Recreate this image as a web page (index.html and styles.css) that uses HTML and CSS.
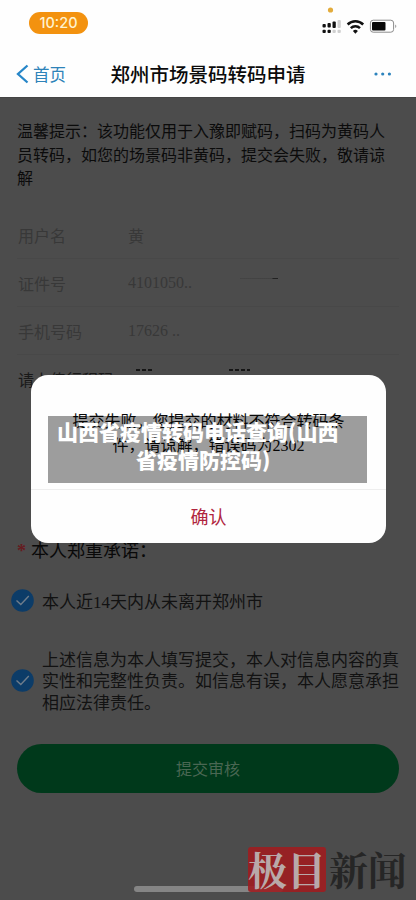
FILE: index.html
```html
<!DOCTYPE html>
<html lang="zh-CN">
<head>
<meta charset="utf-8">
<title>郑州市场景码转码申请</title>
<link rel="stylesheet" href="styles.css">
</head>
<body>
<div class="phone">
  <header class="header">
    <div class="status">
      <span class="time">10:20</span>
      <svg class="indicators" width="80" height="34" viewBox="0 0 80 34">
        <circle cx="12.5" cy="6" r="2.6" fill="#e3ac3c"/>
        <g fill="#111">
          <rect x="4.5" y="20" width="3.3" height="3.5" rx="1"/>
          <rect x="9.5" y="19" width="3.3" height="4.5" rx="1"/>
          <rect x="14.5" y="17.5" width="3.3" height="6.5" rx="1"/>
          <rect x="4.5" y="25.7" width="3.3" height="3.4" rx="1"/>
          <rect x="9.5" y="25.7" width="3.3" height="3.4" rx="1"/>
        </g>
        <g fill="#d0d0d0">
          <rect x="19.5" y="16" width="3.3" height="8" rx="1"/>
          <rect x="14.5" y="25.7" width="3.3" height="3.4" rx="1"/>
          <rect x="19.5" y="25.7" width="3.3" height="3.4" rx="1"/>
        </g>
        <g fill="none" stroke="#111" stroke-width="2.5">
          <path d="M29.6 20.5a11.2 11.2 0 0 1 15.6 0"/>
          <path d="M32.8 24.2a6.6 6.6 0 0 1 9.2 0"/>
        </g>
        <path d="M34.9 27a3.6 3.6 0 0 1 5 0l-2.5 2.8z" fill="#111"/>
        <rect x="52.4" y="16.2" width="23.2" height="12" rx="2.8" fill="#fff" stroke="#8c8c8c"/>
        <rect x="54" y="18" width="13.5" height="8.4" rx="1" fill="#090909"/>
        <path d="M77.2 20.5v3.6c1.5-.6 1.5-3 0-3.6z" fill="#999"/>
      </svg>
    </div>
    <nav class="nav">
      <a class="back"><svg width="13" height="20" viewBox="0 0 13 20"><path d="M11.5 1.5L2 10l9.500 8.500" fill="none" stroke="#2686c8" stroke-width="2.3"/></svg>首页</a>
      <h1 class="title">郑州市场景码转码申请</h1>
      <svg class="more" width="18" height="4" viewBox="0 0 18 4" fill="#2c83bd"><circle cx="2" cy="2" r="1.6"/><circle cx="8.700" cy="2" r="1.6"/><circle cx="15.400" cy="2" r="1.6"/></svg>
    </nav>
  </header>

  <main class="page">
    <p class="notice">温馨提示：该功能仅用于入豫即赋码，扫码为黄码人员转码，如您的场景码非黄码，提交会失败，敬请谅解</p>
    <div class="row"><span class="label">用户名</span><span>黄</span></div>
    <div class="row"><span class="label">证件号</span><span>4101050..</span><i class="smudge"></i></div>
    <div class="row"><span class="label">手机号码</span><span>17626 ..</span></div>
    <div class="row upload"><span class="label">请上传行程码</span><i class="dash"></i><i class="dash second"></i></div>
    <h2 class="promise"><b>*</b>本人郑重承诺：</h2>
    <div class="check first">
      <svg width="23" height="23" viewBox="0 0 23 23"><circle cx="11.500" cy="11.500" r="11.300" fill="#0c3c68"/><path d="M5.500 11.500l4.300 4 8-8.500" fill="none" stroke="#6f7d8b" stroke-width="1.400"/></svg>
      <span>本人近14天内从未离开郑州市</span>
    </div>
    <div class="check">
      <svg width="23" height="23" viewBox="0 0 23 23"><circle cx="11.500" cy="11.500" r="11.300" fill="#0c3c68"/><path d="M5.500 11.500l4.300 4 8-8.500" fill="none" stroke="#6f7d8b" stroke-width="1.400"/></svg>
      <span>上述信息为本人填写提交，本人对信息内容的真实性和完整性负责。如信息有误，本人愿意承担相应法律责任。</span>
    </div>
    <div class="submit">提交审核</div>
  </main>

  <section class="dialog">
    <p class="message">提交失败，您提交的材料不符合转码条<br>件，请谅解，错误码为2302</p>
    <div class="confirm">确认</div>
  </section>
  <div class="caption"><span class="line-a">山西省疫情转码电话查询(山西</span><span class="line-b">省疫情防控码)</span></div>
  <div class="home-bar"></div>
  <div class="brand"><span class="brand-box">极目</span><span class="brand-text">新闻</span></div>
</div>
</body>
</html>
```
FILE: styles.css
```css
* { box-sizing: border-box; }
body { margin: 0; }
.phone {
  position: relative;
  width: 416px;
  height: 900px;
  overflow: hidden;
  background: #4c4c4c;
  font-family: "Liberation Serif", "Noto Sans CJK SC", sans-serif;
}
.header { height: 97px; background: #fefefe; font-family: "Noto Sans CJK SC", sans-serif; }
.status { height: 50px; display: flex; justify-content: space-between; padding: 4px 18px 0 29px; }
.time {
  width: 59px; height: 22px; margin-top: 8px; border-radius: 11px;
  background: #f3920f; color: #fff3d0;
  font: 500 14.5px/22px Inter, sans-serif; text-align: center;
}
.nav { height: 47px; display: grid; grid-template-columns: 80px 1fr 80px; align-items: center; padding: 0 8px 0 16px; }
.back { display: flex; align-items: center; gap: 4px; color: #2e83b9; font-size: 16.500px; line-height: 24px; }
.title { margin: 0 0 0 -8px; font-size: 19.5px; line-height: 28px; font-weight: 500; text-align: center; color: #0b0b0b; white-space: nowrap; }
.more { justify-self: end; margin-right: 16px; }
.page { height: 803px; padding: 22px 17px 0; border-top: 1px solid #444; }
.notice { margin: 0; width: 370px; height: 91px; font-size: 16px; line-height: 23.500px; color: #0b0b0b; }
.row { display: flex; align-items: center; height: 48px; padding-left: 1px; font-size: 16px; color: #383838; border-bottom: 1px solid #484848; }
.label { width: 110px; white-space: nowrap; }
.smudge { width: 38px; height: 1px; margin: -9px 0 0 48px; background: linear-gradient(90deg, #444, #424242 85%, #222 86%); }
.upload { height: 47px; color: #191919; border: 0; }
.dash { width: 17px; height: 2px; margin: -17px 0 0 8px; background: repeating-linear-gradient(90deg, #151515 0 4px, #4c4c4c 4px 6px); }
.second { width: 21px; margin-left: 76px; }
.promise { display: flex; gap: 5px; margin: 132px 0 0; height: 38px; font-size: 18px; line-height: 34px; font-weight: 400; color: #090909; }
.promise b { width: 9px; color: #651b20; font-weight: 700; }
.check { display: flex; align-items: center; gap: 9px; width: 392px; height: 102px; margin-left: -6px; font-size: 17px; line-height: 21.600px; color: #121212; }
.check svg { flex: none; }
.check span { position: relative; left: -1px; top: 2px; }
.check.first { height: 57px; }
.submit { height: 49px; margin-top: 13px; border-radius: 25px; background: #00391b; color: #4a6753; font-size: 16px; line-height: 52px; text-align: center; }
.dialog { position: absolute; left: 31px; top: 375px; width: 355px; height: 168px; border-radius: 17px; background: #fefefe; }
.message { margin: 0; height: 115px; padding-top: 35px; font-size: 16px; line-height: 24px; text-align: center; color: #090909; border-bottom: 1px solid #eee; }
.confirm { line-height: 56px; font-size: 18px; color: #b0253e; text-align: center; }
.caption {
  position: absolute; left: 48px; top: 416px; width: 319px; height: 67px;
  display: flex; flex-direction: column; padding-top: 1px;
  background: rgba(0, 0, 0, .38); color: #fff;
  font: 900 21px/28px "Noto Sans CJK SC", sans-serif; white-space: nowrap;
}
.line-a { padding-left: 9px; }
.line-b { padding-left: 88px; }
.home-bar { position: absolute; left: 134px; top: 886px; width: 149px; height: 6px; border-radius: 3px; background: #858585; }
.brand { position: absolute; left: 248px; top: 847px; display: flex; gap: 3px; font: 700 39px/43px "Noto Serif CJK SC", "Noto Sans CJK SC", serif; }
.brand-box { width: 78px; height: 45px; border-radius: 3px; background: rgba(158, 29, 32, .9); color: #b9a9a9; text-align: center; }
.brand-text { color: #262626; }
```
